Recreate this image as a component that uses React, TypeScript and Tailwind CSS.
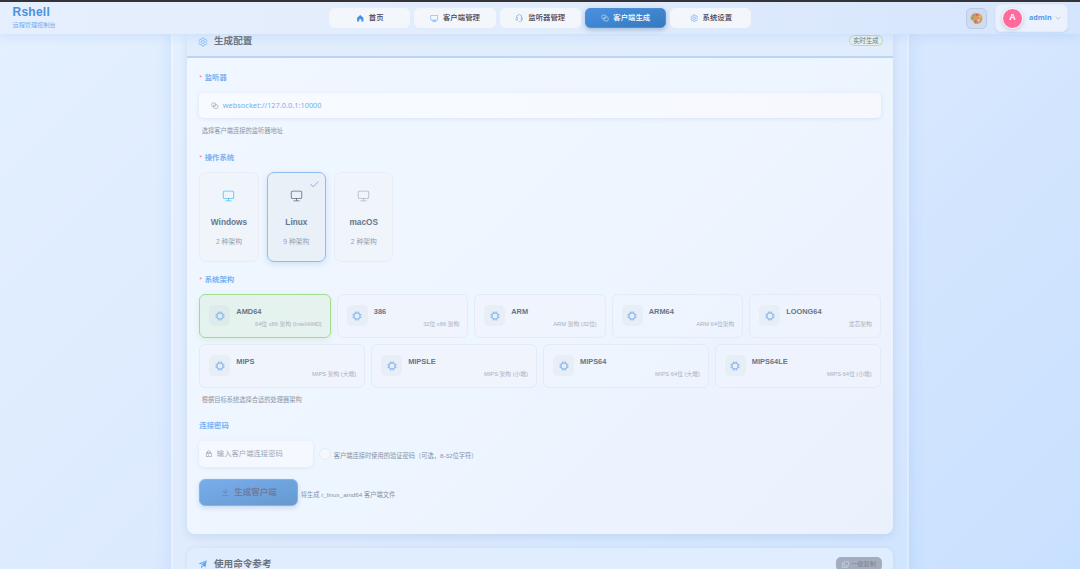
import type { ReactNode } from 'react';
import clsx from 'clsx';

const ICONS = {
  home: ['M512 128 128 447.936V896h255.936V640H640v256h255.936V447.936z'],
  monitor: [
    'M544 768v128h192a32 32 0 1 1 0 64H288a32 32 0 1 1 0-64h192V768H192A128 128 0 0 1 64 640V256a128 128 0 0 1 128-128h640a128 128 0 0 1 128 128v384a128 128 0 0 1-128 128zM192 192a64 64 0 0 0-64 64v384a64 64 0 0 0 64 64h640a64 64 0 0 0 64-64V256a64 64 0 0 0-64-64z',
  ],
  service: [
    'M864 409.6a192 192 0 0 1-37.888 349.44A256.064 256.064 0 0 1 576 960h-96a32 32 0 1 1 0-64h96a192.064 192.064 0 0 0 181.12-128H736a32 32 0 0 1-32-32V416a32 32 0 0 1 32-32h32c10.368 0 20.544.832 30.528 2.432a288 288 0 0 0-573.056 0A193.235 193.235 0 0 1 256 384h32a32 32 0 0 1 32 32v320a32 32 0 0 1-32 32h-32a192 192 0 0 1-96-358.4 352 352 0 0 1 704 0M256 448a128 128 0 1 0 0 256zm640 128a128 128 0 0 0-128-128v256a128 128 0 0 0 128-128',
  ],
  promotion: ['m64 448 832-320-128 704-446.08-243.328L832 192 242.816 545.536zm256 512V657.024L512 768z'],
  lock: [
    'M224 448a32 32 0 0 0-32 32v384a32 32 0 0 0 32 32h576a32 32 0 0 0 32-32V480a32 32 0 0 0-32-32zm0-64h576a96 96 0 0 1 96 96v384a96 96 0 0 1-96 96H224a96 96 0 0 1-96-96V480a96 96 0 0 1 96-96',
    'M512 544a32 32 0 0 1 32 32v192a32 32 0 1 1-64 0V576a32 32 0 0 1 32-32m192-160v-64a192 192 0 1 0-384 0v64zM512 64a256 256 0 0 1 256 256v128H256V320A256 256 0 0 1 512 64',
  ],
  download: [
    'M160 832h704a32 32 0 1 1 0 64H160a32 32 0 1 1 0-64m384-253.696 236.288-236.352 45.248 45.248L508.8 704 192 387.2l45.248-45.248L480 584.704V128h64z',
  ],
  check: [
    'M406.656 706.944 195.84 496.256a32 32 0 1 0-45.248 45.248l256 256 512-512a32 32 0 0 0-45.248-45.248L406.592 706.944z',
  ],
};

type IconName = keyof typeof ICONS;

function Icon({ name, className }: { name: IconName; className?: string }) {
  return (
    <svg viewBox="0 0 1024 1024" fill="currentColor" className={clsx('shrink-0', className)}>
      {ICONS[name].map((d) => (
        <path key={d} d={d} />
      ))}
    </svg>
  );
}

function SettingIcon({ className }: { className?: string }) {
  return (
    <svg viewBox="0 0 1024 1024" fill="none" stroke="currentColor" strokeWidth="76" strokeLinejoin="round" className={clsx('shrink-0', className)}>
      <path d="M424 96h176l40 124 58 34 126-27 88 152-87 97v72l87 97-88 152-126-27-58 34-40 124H424l-40-124-58-34-126 27-88-152 87-97v-72l-87-97 88-152 126 27 58-34z" />
      <circle cx="512" cy="512" r="160" />
    </svg>
  );
}

// Two interlocked rounded links
function ConnectionIcon({ className }: { className?: string }) {
  return (
    <svg viewBox="0 0 1024 1024" fill="none" stroke="currentColor" strokeWidth="84" strokeLinecap="round" className={clsx('shrink-0', className)}>
      <path d="M250 650A160 160 0 0 1 96 490V300a160 160 0 0 1 160-160h250a160 160 0 0 1 160 160v120a160 160 0 0 1-160 160H400" />
      <path d="M774 380a160 160 0 0 1 154 160v184a160 160 0 0 1-160 160H500a160 160 0 0 1-160-160V560a160 160 0 0 1 160-160h120" />
    </svg>
  );
}

function CpuIcon({ className }: { className?: string }) {
  return (
    <svg viewBox="0 0 1024 1024" fill="none" stroke="currentColor" strokeWidth="80" strokeLinecap="round" className={clsx('shrink-0', className)}>
      <rect x="224" y="224" width="576" height="576" rx="100" />
      <path d="M352 96v128M512 96v128M672 96v128M352 800v128M512 800v128M672 800v128M96 352h128M96 512h128M96 672h128M800 352h128M800 512h128M800 672h128" />
    </svg>
  );
}

const NAV: { label: string; icon: IconName | 'setting' | 'connection'; active?: boolean }[] = [
  { label: '首页', icon: 'home' },
  { label: '客户端管理', icon: 'monitor' },
  { label: '监听器管理', icon: 'service' },
  { label: '客户端生成', icon: 'connection', active: true },
  { label: '系统设置', icon: 'setting' },
];

const SYSTEMS = [
  { name: 'Windows', count: 2, color: 'text-[#54bdf5]' },
  { name: 'Linux', count: 9, color: 'text-[#656a76]', active: true },
  { name: 'macOS', count: 2, color: 'text-[#b0b5bf]' },
];

const ARCH_TOP = [
  { name: 'AMD64', desc: '64位 x86 架构 (Intel/AMD)', active: true },
  { name: '386', desc: '32位 x86 架构' },
  { name: 'ARM', desc: 'ARM 架构 (32位)' },
  { name: 'ARM64', desc: 'ARM 64位架构' },
  { name: 'LOONG64', desc: '龙芯架构' },
];

const ARCH_BOTTOM = [
  { name: 'MIPS', desc: 'MIPS 架构 (大端)' },
  { name: 'MIPSLE', desc: 'MIPS 架构 (小端)' },
  { name: 'MIPS64', desc: 'MIPS 64位 (大端)' },
  { name: 'MIPS64LE', desc: 'MIPS 64位 (小端)' },
];

function Label({ children, required }: { children: ReactNode; required?: boolean }) {
  return (
    <div className="flex h-3 items-center text-[7.4px] font-bold leading-3 text-[#7db1f2]">
      {required && <span className="mr-[2.5px] font-normal text-[#f3858c]">*</span>}
      {children}
    </div>
  );
}

function ArchCard({ name, desc, active }: { name: string; desc: string; active?: boolean }) {
  return (
    <div
      className={clsx(
        'flex items-center rounded-[6px] pl-[9px] pr-[8px]',
        active
          ? 'border border-[#a0dc92] bg-linear-to-br from-[#e4f2ef] to-[#e6f2ee] shadow-[0_2px_6px_rgba(103,194,58,0.15)]'
          : 'border border-[#e5ebf5] bg-[#eff4fc]/70'
      )}
    >
      <div className={clsx('flex size-[21px] shrink-0 items-center justify-center rounded-[5px]', active ? 'bg-[#deebed]' : 'bg-[#e8eef6]')}>
        <CpuIcon className="size-[10px] text-[#7db2f0]" />
      </div>
      <div className="ml-[6px] flex-1 pt-[4px]">
        <div className="text-[7.4px] font-bold leading-[10px] text-[#65758a]">{name}</div>
        <div className="mt-[3px] text-right text-[5.75px] leading-[9px] text-[#a9b0bc]">{desc}</div>
      </div>
    </div>
  );
}

function Header() {
  return (
    <header className="relative z-10 flex h-[34px] shrink-0 items-center border-t-2 border-[#343438] bg-linear-to-r from-[#e6effd] via-[#e1ecfc] to-[#d5e5fd] shadow-[0_2px_10px_rgba(90,150,230,0.17)]">
      <div className="w-[329px] pl-[12.500px]">
        <div className="text-[12px] font-bold leading-[11px] tracking-[0.25px] text-[#4a90db]">Rshell</div>
        <div className="mt-[2px] text-[6.2px] leading-[9px] text-[#74adf0]">远程管理控制台</div>
      </div>
      <nav className="flex gap-[4px]">
        {NAV.map((item) => (
          <div
            key={item.label}
            className={clsx(
              'flex h-[20px] w-[81.3px] items-center justify-center gap-[4.500px] rounded-[5px] border text-[7.4px] font-medium',
              item.active
                ? 'border-[#4f8fd8] bg-linear-to-br from-[#4a90e2] to-[#357abd] text-white shadow-[0_2px_5px_rgba(60,100,150,0.35)]'
                : 'border-[#f0f6fd] bg-[#f3f7fc] text-[#4b3f50]'
            )}
          >
            {item.icon === 'setting' ? (
              <SettingIcon className="size-[8.5px] text-[#68a8ee]" />
            ) : item.icon === 'connection' ? (
              <ConnectionIcon className="size-[8px] text-[#c6dcf5]" />
            ) : (
              <Icon name={item.icon} className={clsx('size-[8.5px]', item.icon === 'home' ? 'text-[#4a90e2]' : 'text-[#64a6ee]')} />
            )}
            {item.label}
          </div>
        ))}
      </nav>
      <div className="ml-auto flex items-center pr-[12px]">
        <div className="mr-[8px] flex size-[21px] items-center justify-center rounded-[5px] border border-[#bdcbe2] bg-[#cddcf2]">
          <svg viewBox="0 0 24 24" className="size-[13px]">
            <path d="M13 2C6 1 1 6 1 11.500c0 3 2.500 4 4 4.500 2 1 1 4 4 5.500 6 2.500 14-2 14-9.500C23 6 18 2.500 13 2zM16 13.500a1.800 1.800 0 1 1 0 3.600 1.800 1.800 0 0 1 0-3.600z" fill="#dc9a63" />
            <circle cx="13" cy="5.500" r="2" fill="#e0584c" />
            <circle cx="7.500" cy="6.500" r="2" fill="#5f9fce" />
            <circle cx="4.500" cy="11" r="2" fill="#68a96c" />
            <circle cx="18.500" cy="8.500" r="2" fill="#f0c34c" />
            <circle cx="10.500" cy="17.500" r="2" fill="#a15f8c" />
          </svg>
        </div>
        <div className="flex h-[28px] w-[73px] items-center rounded-[6px] border border-[#e3ebf7] bg-[#ebf2fe] pl-[6px] shadow-[0_1px_2px_rgba(80,120,180,0.12)]">
          <div className="flex size-[21px] items-center justify-center rounded-full border-[1.500px] border-white bg-[#ff6b9d] text-[9px] font-bold text-white shadow-[0_1px_4px_rgba(60,80,120,0.25)]">
            A
          </div>
          <span className="ml-[6px] pb-px font-['Noto_Sans'] text-[7.2px] font-bold text-[#579be6]">admin</span>
          <svg viewBox="0 0 10 10" fill="none" stroke="#adb9cb" className="ml-[3px] size-[6px]">
            <path d="M1 3l4 4 4-4" strokeWidth="1.300" />
          </svg>
        </div>
      </div>
    </header>
  );
}

export default function App() {
  return (
    <div className="flex h-[569px] w-[1080px] flex-col overflow-hidden bg-linear-[135deg,#e4f0ff_0%,#dbe9fe_50%,#c8e0ff_100%] font-['Liberation_Sans','Noto_Sans_CJK_SC',sans-serif]">
      <Header />

      <main className="ml-[171px] w-[738px] flex-1 border-x-2 border-white/25 bg-white/10 px-[14px] shadow-[0_0_16px_rgba(100,160,240,0.2)]">
        <section className="h-[500px] overflow-hidden rounded-b-[8px] bg-linear-[135deg,#f0f7ff_0%,#edf5ff_55%,#ebf0fd_100%] shadow-[0_3px_10px_rgba(100,140,190,0.2)]">
          <div className="flex h-[24px] items-start justify-between border-b-2 border-[#b9d6f4] bg-[#e1edfd] pl-[11px] pr-[10px]">
            <div className="flex h-[15px] items-center text-[9.6px] font-bold text-[#6f757f]">
              <SettingIcon className="mr-[6px] size-[10px] text-[#80b6f4]" />
              生成配置
            </div>
            <div className="mt-px flex h-[11px] items-center rounded-full border border-[#b3deb9] bg-[#e6f2ef] px-[3.500px] text-[6.3px] text-[#727b84]">
              实时生成
            </div>
          </div>

          <div className="px-[12.300px] pt-[14px]">
            <Label required>监听器</Label>
            <div className="mt-[9px] flex h-[25px] items-center rounded-[5px] bg-linear-to-r from-[#f7fbff] to-[#f6f8fe] pl-[12px] shadow-[0_1px_4px_rgba(100,130,170,0.14)]">
              <ConnectionIcon className="mr-[4px] size-[7.500px] text-[#9b9ca8]" />
              <span className="font-['Noto_Sans'] text-[7.4px] text-[#78aff0]">websocket://127.0.0.1:10000</span>
            </div>
            <div className="mt-[8px] pl-[2.500px] text-[6.25px] leading-[9px] text-[#8c95a4]">选择客户端连接的监听器地址</div>

            <div className="mt-[16.500px]">
              <Label required>操作系统</Label>
            </div>
            <div className="mt-[8.500px] flex gap-[8px]">
              {SYSTEMS.map((os) => (
                <div
                  key={os.name}
                  className={clsx(
                    'relative flex h-[89.500px] w-[59.4px] flex-col items-center rounded-[7px] border pt-[16px]',
                    os.active ? 'border-[#8fbdf2] bg-[#e9f0f8] shadow-[0_2px_6px_rgba(80,130,200,0.2)]' : 'border-[#e8edf5] bg-[#f0f5fc]'
                  )}
                >
                  <Icon name="monitor" className={clsx('size-[13px]', os.color)} />
                  <div className="mt-[13.500px] text-[8.3px] font-bold leading-[12px] text-[#66778b]">{os.name}</div>
                  <div className="mt-[9px] text-[6.8px] leading-[10px] text-[#979fab]">{os.count} 种架构</div>
                  {os.active && <Icon name="check" className="absolute right-[6px] top-[6px] size-[10.500px] text-[#7bafed]" />}
                </div>
              ))}
            </div>

            <div className="mt-[12px]">
              <Label required>系统架构</Label>
            </div>
            <div className="mt-[8px] grid h-[44px] grid-cols-5 gap-[6px]">
              {ARCH_TOP.map((arch) => (
                <ArchCard key={arch.name} {...arch} />
              ))}
            </div>
            <div className="mt-[6px] grid h-[44px] grid-cols-4 gap-[6px]">
              {ARCH_BOTTOM.map((arch) => (
                <ArchCard key={arch.name} {...arch} />
              ))}
            </div>
            <div className="mt-[7px] pl-[2.500px] text-[6.25px] leading-[9px] text-[#8c95a4]">根据目标系统选择合适的处理器架构</div>

            <div className="mt-[16.500px]">
              <Label>连接密码</Label>
            </div>
            <div className="mt-[9px] flex h-[26px] items-center">
              <div className="flex h-full w-[114px] items-center rounded-[5px] bg-[#f5f9ff] pl-[6px] text-[7.35px] text-[#a0a7b3] shadow-[0_1px_4px_rgba(100,130,170,0.12)]">
                <Icon name="lock" className="mr-[4px] size-[7.500px] text-[#80838e]" />
                输入客户端连接密码
              </div>
              <div className="ml-[6px] size-[12px] rounded-full border border-[#e6ecf7] bg-[#f3f8ff]" />
              <span className="ml-[2.500px] pt-[3px] text-[6.25px] text-[#8893a3]">客户端连接时使用的验证密码（可选，8-32位字符）</span>
            </div>

            <div className="mt-[12px] flex h-[27px] items-center">
              <button className="flex h-full w-[99px] items-center justify-center gap-[5px] rounded-[6px] border border-[#80b4ef] bg-linear-to-br from-[#78adec] to-[#659acf] text-[8.5px] font-bold text-[#6f7c9c] shadow-[0_2px_5px_rgba(80,120,170,0.22)]">
                <Icon name="download" className="size-[8.500px]" />
                生成客户端
              </button>
              <span className="ml-[2.500px] pt-[4px] text-[6.25px] text-[#8893a3]">将生成 r_linux_amd64 客户端文件</span>
            </div>
          </div>
        </section>

        <section className="mt-[14px] flex h-[60px] items-start justify-between rounded-[8px] bg-[#e0edfe] pl-[11px] pr-[11px] pt-[8px] shadow-[0_0_4px_rgba(100,140,190,0.16)]">
          <div className="flex h-[16px] items-center text-[9.6px] font-bold text-[#69717d]">
            <Icon name="promotion" className="mr-[6px] size-[10px] text-[#68a6ec]" />
            使用命令参考
          </div>
          <div className="mt-px flex h-[14px] w-[46px] items-center justify-center gap-[2px] rounded-[5px] bg-[#a4adbd] text-[6.2px] text-[#817f90]">
            <svg viewBox="0 0 16 16" fill="none" stroke="#cbd3df" className="size-[7px] shrink-0" strokeWidth="1.700">
              <rect x="4.500" y="1" width="10.500" height="10.500" rx="1" />
              <path d="M4.500 4.500H1V15h10.500v-3.500" />
            </svg>
            一键复制
          </div>
        </section>
      </main>
    </div>
  );
}
